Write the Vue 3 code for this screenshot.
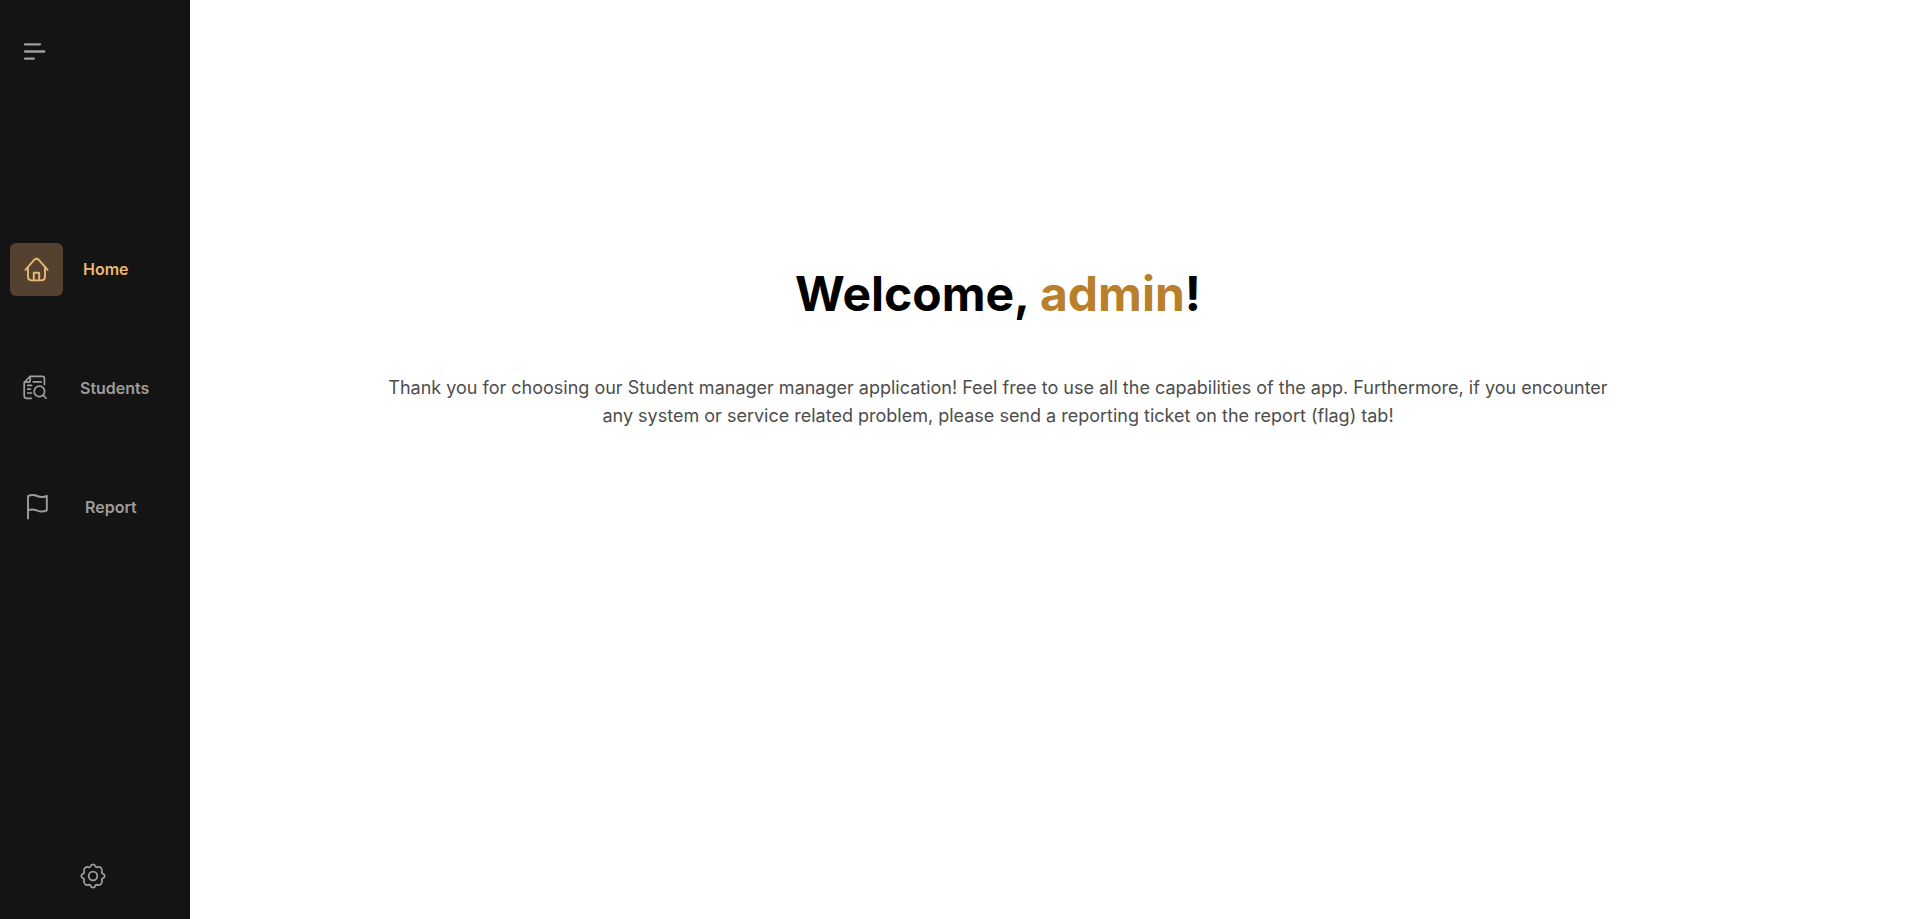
<script setup>
const items = [
  { id: 'home', label: 'Home', active: true },
  { id: 'students', label: 'Students', active: false },
  { id: 'report', label: 'Report', active: false }
]
const user = 'admin'
</script>

<template>
  <div class="layout">
    <aside class="sidebar">
      <button class="menu" type="button" aria-label="Toggle menu">
        <svg width="22" height="18" viewBox="0 0 22 18" fill="none" stroke="currentColor" stroke-width="2.3" stroke-linecap="round">
          <path d="M1 2.3H16M1 9.5H20.3M1 16.6H10" />
        </svg>
      </button>

      <nav class="nav" aria-label="Main">
        <a
          v-for="item in items"
          :key="item.id"
          href="#"
          class="item"
          :class="{ active: item.active }"
          :aria-current="item.active ? 'page' : undefined"
        >
          <span class="tile">
            <svg v-if="item.id === 'home'" width="27" height="27" viewBox="0 0 27 27" fill="none" stroke="currentColor" stroke-width="1.9" stroke-linecap="round" stroke-linejoin="round">
              <path d="M2.4 13.8L11.4 3.7Q13.5 1.8 15.6 3.7L24.6 13.8" />
              <path d="M5 11.4V20.5Q5 24.4 9 24.4H18Q22 24.4 22 20.5V11.4" />
              <path d="M10.8 24.4V16.8H16.2V24.4" />
            </svg>
            <svg v-else-if="item.id === 'students'" width="24" height="27" viewBox="0 1 24 27" fill="none" stroke="currentColor" stroke-width="1.7" stroke-linecap="round" stroke-linejoin="round">
              <path d="M8.3 24.3H3.6Q1.2 24.3 1.2 21.8V8.5L7.2 2.3H19.2Q21.4 2.3 21.4 4.5V10.4" />
              <path d="M1.6 8.2H5.2Q7.2 8.2 7.2 6.2V2.6" />
              <path d="M10.2 7.8H18.2M4.7 11.4H8.6M4.7 15.2H7.4M4.7 19H8.6" />
              <circle cx="16.4" cy="17.4" r="5.2" />
              <path d="M20.3 21.2L23 24.3" />
            </svg>
            <svg v-else width="29" height="27" viewBox="0 1 29 27" fill="none" stroke="currentColor" stroke-width="1.9" stroke-linecap="round" stroke-linejoin="round">
              <path d="M5 25.5V3.2Q9 1 14.2 3T23.8 2.8V17.4Q19 19.6 14.2 17.6T5 17.4" />
            </svg>
          </span>
          <span class="label">{{ item.label }}</span>
        </a>
      </nav>

      <button class="settings" type="button" aria-label="Settings">
        <svg width="26" height="26" viewBox="0 0 26 26" fill="none" stroke="currentColor" stroke-width="1.8" stroke-linejoin="round">
          <circle cx="13" cy="13" r="4.3" />
          <path d="M10.6 3.3C11.4 0.7 14.6 0.7 15.4 3.3Q16 4.6 17.4 4.1C20 3 22.9 5.9 21.9 8.6Q21.4 10 22.7 10.6C25.3 11.4 25.3 14.6 22.7 15.4Q21.4 16 21.9 17.4C22.9 20.1 20 23 17.4 21.9Q16 21.4 15.4 22.7C14.6 25.3 11.4 25.3 10.6 22.7Q10 21.4 8.6 21.9C6 23 3.1 20.1 4.1 17.4Q4.6 16 3.3 15.4C0.7 14.6 0.7 11.4 3.3 10.6Q4.6 10 4.1 8.6C3.1 5.9 6 3 8.6 4.1Q10 4.6 10.6 3.3Z" />
        </svg>
      </button>
    </aside>

    <main class="content">
      <h1>Welcome, <span class="name">{{ user }}</span>!</h1>
      <p>
        Thank you for choosing our Student manager manager application! Feel free to use all the
        capabilities of the app. Furthermore, if you encounter any system or service related
        problem, please send a reporting ticket on the report (flag) tab!
      </p>
    </main>
  </div>
</template>

<style>
body {
  margin: 0;
  background: #fff;
}
</style>

<style scoped>
.layout {
  display: flex;
  min-height: 100vh;
  font-family: Inter, "Liberation Sans", sans-serif;
}
.sidebar {
  display: flex;
  flex-direction: column;
  flex: none;
  width: 190px;
  box-sizing: border-box;
  padding: 42px 0 30px;
  background: #141414;
  color: #9d9d9d;
}
button {
  display: flex;
  padding: 0;
  border: 0;
  background: none;
  color: inherit;
  cursor: pointer;
}
.menu {
  align-self: flex-start;
  margin-left: 24px;
}
.nav {
  display: flex;
  flex-direction: column;
  gap: 66px;
  margin-top: 183px;
  padding-left: 10px;
}
.item {
  display: flex;
  align-items: center;
  gap: 20px;
  color: inherit;
  text-decoration: none;
}
.tile {
  display: flex;
  padding: 13px;
  border-radius: 6px;
}
.label {
  padding-bottom: 2px;
  font-size: 16px;
  line-height: 24px;
  font-weight: 600;
}
.active {
  color: #e9b872;
}
.active .tile {
  background: #544130;
}
.settings {
  align-self: flex-start;
  margin-top: auto;
  margin-left: 80px;
}
.content {
  flex: 1;
  display: flex;
  flex-direction: column;
  align-items: center;
  padding: 264px 132px 0 24px;
  text-align: center;
}
h1 {
  margin: 0;
  font-size: 48px;
  line-height: 60px;
  font-weight: 700;
  color: #000;
}
.name {
  color: #b9802c;
}
p {
  max-width: 1240px;
  margin: 50px 0 0;
  font-size: 18px;
  line-height: 28px;
  color: #4d4d4d;
}
</style>
